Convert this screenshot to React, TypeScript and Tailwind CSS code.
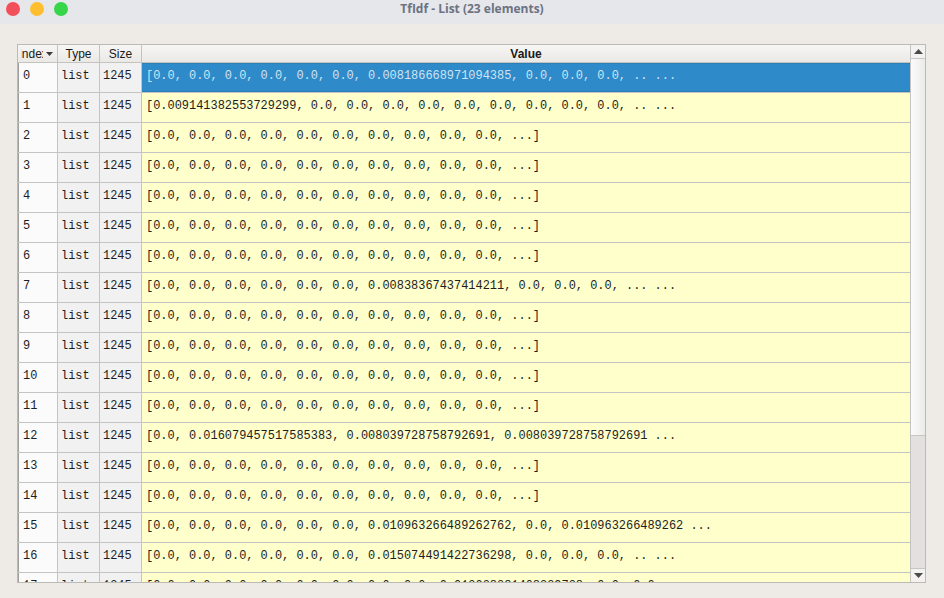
import React from "react";

const Z = "[0.0, 0.0, 0.0, 0.0, 0.0, 0.0, 0.0, 0.0, 0.0, 0.0, ...]";
const rows: string[] = [
  "[0.0, 0.0, 0.0, 0.0, 0.0, 0.0, 0.008186668971094385, 0.0, 0.0, 0.0, .. ...",
  "[0.009141382553729299, 0.0, 0.0, 0.0, 0.0, 0.0, 0.0, 0.0, 0.0, 0.0, .. ...",
  Z,
  Z,
  Z,
  Z,
  Z,
  "[0.0, 0.0, 0.0, 0.0, 0.0, 0.0, 0.00838367437414211, 0.0, 0.0, 0.0, ... ...",
  Z,
  Z,
  Z,
  Z,
  "[0.0, 0.016079457517585383, 0.008039728758792691, 0.008039728758792691 ...",
  Z,
  Z,
  "[0.0, 0.0, 0.0, 0.0, 0.0, 0.0, 0.010963266489262762, 0.0, 0.010963266489262 ...",
  "[0.0, 0.0, 0.0, 0.0, 0.0, 0.0, 0.015074491422736298, 0.0, 0.0, 0.0, .. ...",
  "[0.0, 0.0, 0.0, 0.0, 0.0, 0.0, 0.0, 0.0, 0.013028381408339728, 0.0, 0.0 ...",
];

export default function App() {
  return (
    <div className="w-[944px] h-[598px] bg-[#eeebe7] overflow-hidden flex flex-col font-['Liberation_Sans',sans-serif]">
      {/* title bar */}
      <div className="relative h-[24px] bg-[#e6e7eb] flex items-center justify-center shrink-0">
        <div className="absolute left-[6px] top-[2px] flex gap-[10px]">
          <div className="w-[14px] h-[14px] rounded-full bg-[#f1505a]" />
          <div className="w-[14px] h-[14px] rounded-full bg-[#fdbf2f]" />
          <div className="w-[14px] h-[14px] rounded-full bg-[#37d54a]" />
        </div>
        <div className="text-[12px] font-bold text-[#6c7282] font-['Open_Sans',sans-serif] -mt-[6px]">
          TfIdf - List (23 elements)
        </div>
      </div>

      <div className="pl-[17px] pt-[20px]">
        <div className="w-[909px] h-[539px] border border-[#bcbab7] flex bg-white">
          {/* table */}
          <div className="flex-1 flex flex-col overflow-hidden">
            {/* header */}
            <div className="h-[18px] shrink-0 flex border-b border-[#c5c3c0] bg-gradient-to-b from-[#f7f6f4] to-[#ebe9e6] text-[12px] text-[#1a1a1a]">
              <div className="w-[40px] border-r border-[#c5c3c0] flex items-center">
                <div className="ml-[3px] w-[22px] overflow-hidden whitespace-nowrap">
                  <span className="inline-block -ml-[2.5px]">Index</span>
                </div>
                <svg className="ml-[3px]" width="7" height="4" viewBox="0 0 7 4">
                  <path d="M0 0 L7 0 L3.5 4 Z" fill="#3a3a3a" />
                </svg>
              </div>
              <div className="w-[42px] border-r border-[#c5c3c0] flex items-center justify-center">Type</div>
              <div className="w-[42px] border-r border-[#c5c3c0] flex items-center justify-center">Size</div>
              <div className="flex-1 flex items-center justify-center font-bold">Value</div>
            </div>
            {/* rows */}
            {rows.map((v, i) => {
              const sel = i === 0;
              return (
                <div key={i} className="h-[30px] shrink-0 flex border-b border-[#c4c4c4] text-[11.95px] font-['Liberation_Mono',monospace] text-[#1e1e1e]">
                  <div className="w-[40px] border-r border-[#c4c4c4] bg-[#fbfbfb] shadow-[inset_1px_0_0_#9f9f9f] flex items-center pl-[5px] pb-[1px]">
                    {i}
                  </div>
                  <div className="w-[42px] border-r border-[#c4c4c4] bg-[#f1f1f1] flex items-center pl-[3px] pb-[1px]">list</div>
                  <div className="w-[42px] border-r border-[#c4c4c4] bg-[#f1f1f1] flex items-center pl-[3px] pb-[1px]">1245</div>
                  <div
                    className={
                      sel
                        ? "flex-1 flex items-center pl-[4px] pb-[1px] whitespace-nowrap overflow-hidden bg-[#2e8ac8] text-[#cfe3f3] border-y border-[#2a7fb9]"
                        : "flex-1 flex items-center pl-[4px] pb-[1px] whitespace-nowrap overflow-hidden bg-[#ffffcc]"
                    }
                  >
                    {v}
                  </div>
                </div>
              );
            })}
          </div>
          {/* scrollbar */}
          <div className="w-[15px] border-l border-[#c5c3c0] flex flex-col bg-[#e2e1df]">
            <div className="h-[14px] shrink-0 border-b border-[#c8c6c3] bg-[#f3f2f0] flex items-center justify-center">
              <svg width="9" height="5" viewBox="0 0 9 5">
                <path d="M0 5 L9 5 L4.5 0 Z" fill="#4a4a4a" />
              </svg>
            </div>
            <div className="h-[377px] shrink-0 border-b border-[#c8c6c3] bg-gradient-to-r from-[#fbfbfb] to-[#ebebea]" />
            <div className="flex-1" />
            <div className="h-[14px] shrink-0 border-t border-[#c8c6c3] bg-[#f3f2f0] flex items-center justify-center">
              <svg width="9" height="5" viewBox="0 0 9 5">
                <path d="M0 0 L9 0 L4.5 5 Z" fill="#4a4a4a" />
              </svg>
            </div>
          </div>
        </div>
      </div>
    </div>
  );
}
